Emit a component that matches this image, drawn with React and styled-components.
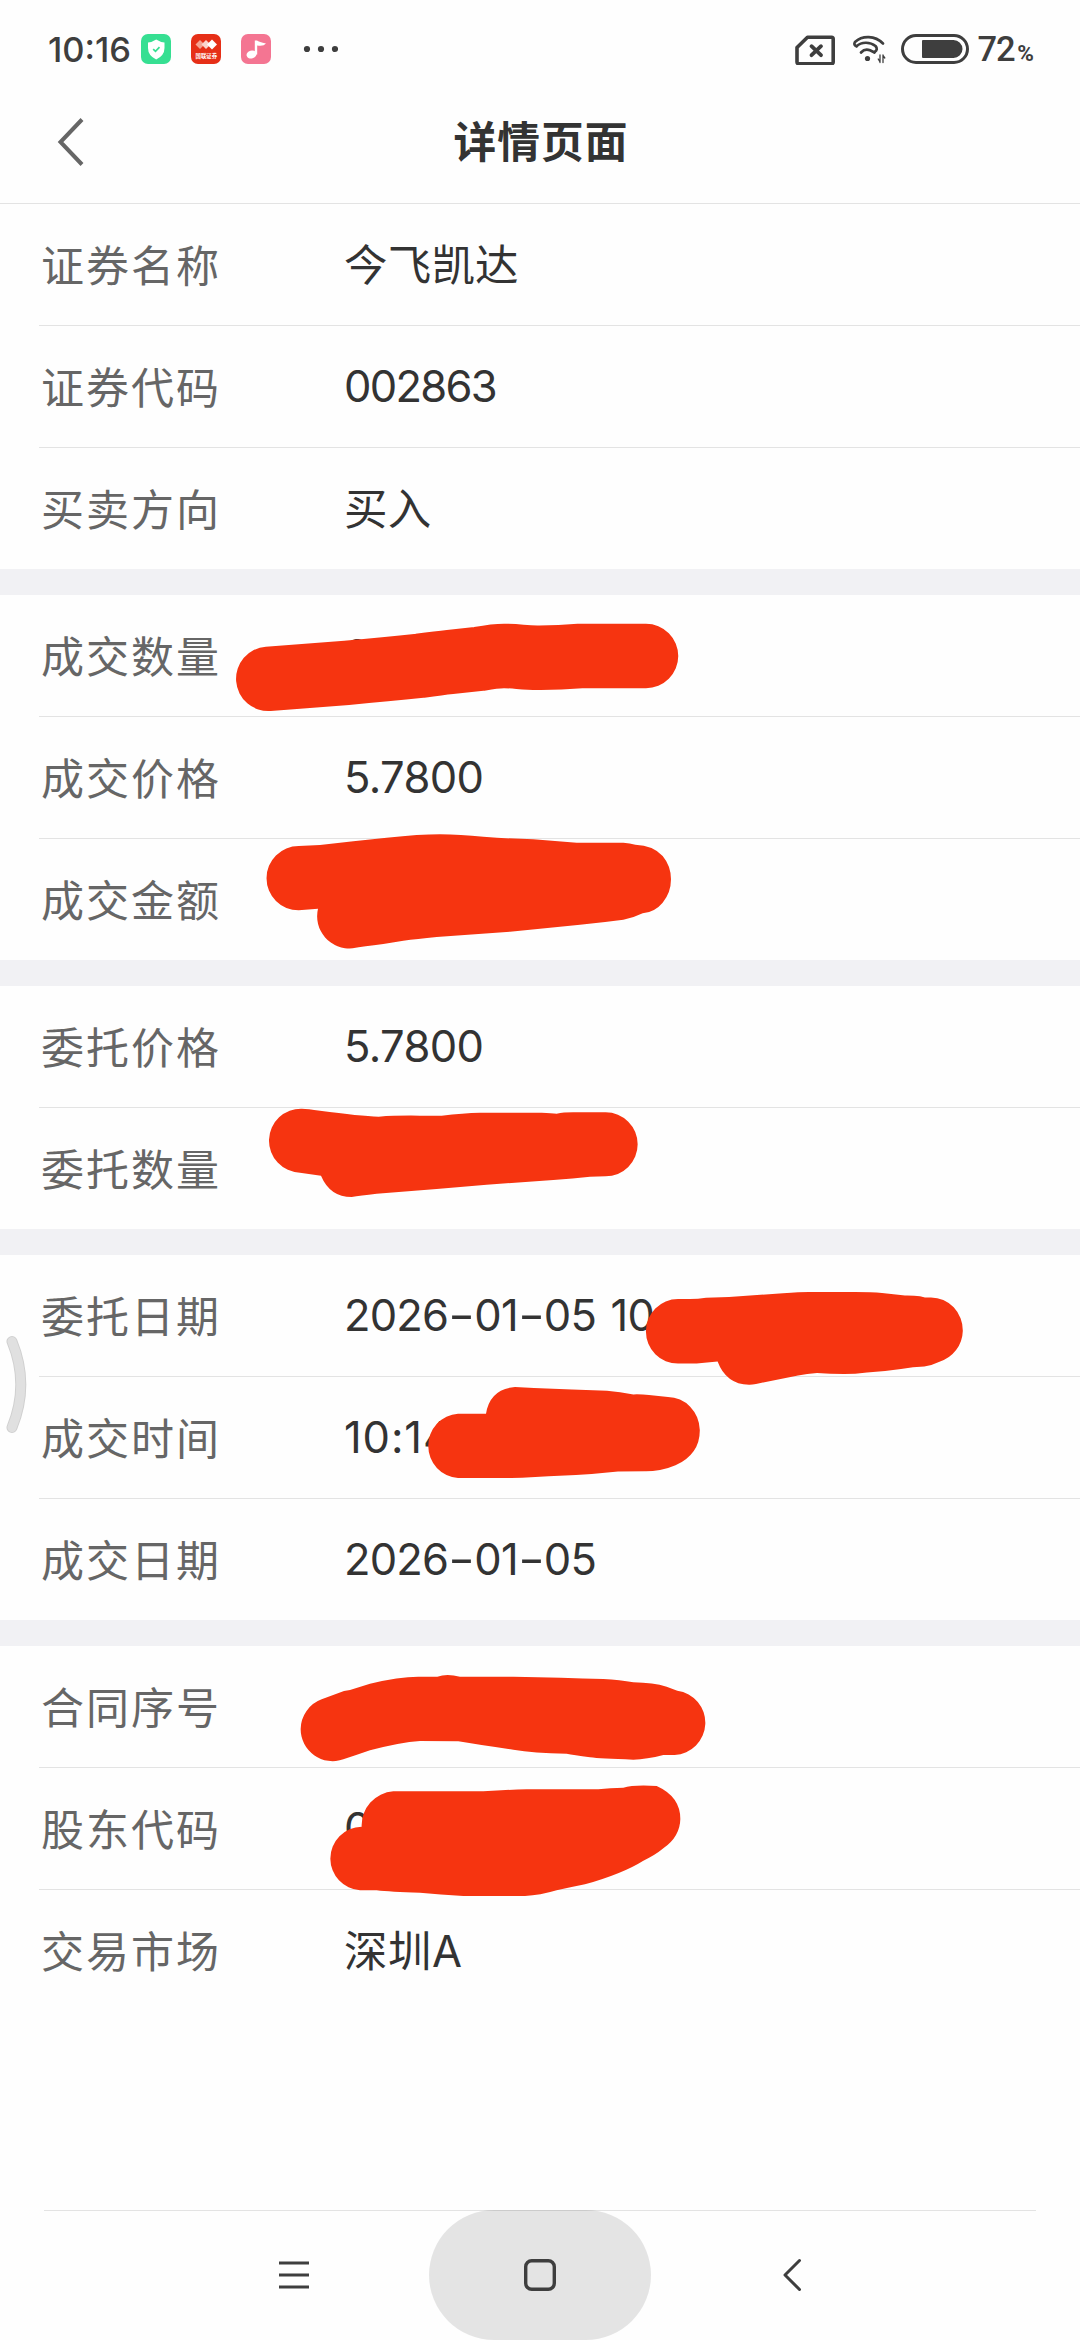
import React from 'react'
import styled, { createGlobalStyle } from 'styled-components'

const GlobalStyle = createGlobalStyle`
  * {
    box-sizing: border-box;
  }
  body {
    margin: 0;
    background: #fefefe;
    font-family: Inter, "Noto Sans CJK SC", sans-serif;
  }
`

const Phone = styled.div`
  position: relative;
  display: flex;
  flex-direction: column;
  width: 1080px;
  height: 2340px;
  overflow: hidden;
  background: #fefefe;
`

const StatusBar = styled.div`
  display: flex;
  align-items: center;
  justify-content: space-between;
  height: 82px;
  padding: 16px 46px 0 48px;
  color: #3e3e3e;
`

const StatusGroup = styled.div`
  display: flex;
  align-items: center;
  height: 40px;
`

const Clock = styled.span`
  width: 93px;
  padding-top: 1px;
  font-size: 34.5px;
  font-weight: 500;
  line-height: 40px;
  white-space: nowrap;
`

const AppIcon = styled.svg`
  width: 30px;
  height: 30px;
  margin-right: 20px;
`

const Dots = styled.svg`
  width: 36px;
  height: 8px;
  margin-left: 11px;
`

const StatusIcon = styled.svg`
  width: ${p => p.$w}px;
  height: 32px;
  margin-right: ${p => p.$gap}px;
`

const Percent = styled.span`
  padding-top: 4px;
  font-family: Roboto, sans-serif;
  font-size: 34.5px;
  font-weight: 500;
  line-height: 40px;
  letter-spacing: -1.2px;

  small {
    margin-left: 3px;
    font-size: 22.5px;
    font-weight: 700;
    letter-spacing: 0;
  }
`

const Header = styled.header`
  display: grid;
  grid-template-columns: 120px 1fr 120px;
  align-items: center;
  height: 122px;
  padding-bottom: 2px;
  border-bottom: 1px solid #e3e3e3;
`

const BackIcon = styled.svg`
  width: 28px;
  height: 50px;
  margin-left: 57px;
`

const Title = styled.h1`
  margin: 0;
  padding: 2px 0 0 2px;
  color: #333;
  font-size: 42.7px;
  font-weight: 700;
  line-height: 60px;
  letter-spacing: 1.1px;
  text-align: center;
`

const List = styled.main`
  flex: 1;
`

const Section = styled.section`
  & + & {
    border-top: 26px solid #f1f1f4;
  }
`

const Row = styled.div`
  display: flex;
  align-items: center;
  height: 122px;
  margin-left: 39px;
  padding-left: 2px;
  border-bottom: 1px solid #e3e3e3;

  &:last-child {
    height: 121px;
    border-bottom: none;
  }
`

const Label = styled.span`
  width: 303px;
  padding-top: 2px;
  color: #666;
  font-size: 43px;
  line-height: 60px;
  letter-spacing: 2px;
`

const Value = styled.span`
  padding-bottom: ${p => (p.$numeric ? 2 : 0)}px;
  color: #333;
  font-size: 43.5px;
  line-height: 60px;
  letter-spacing: ${p => p.$spacing || 0}px;
  word-spacing: 3px;
  white-space: pre;
`

const Dash = styled.span`
  display: inline-block;
  width: 26px;
  text-align: center;
  transform: scaleX(1.35);
`

const NavBar = styled.nav`
  display: flex;
  justify-content: center;
  height: 130px;
  margin: 0 44px;
  border-top: 1px solid #e3e3e3;
`

const NavButton = styled.button`
  display: flex;
  align-items: center;
  justify-content: center;
  width: ${p => (p.$active ? 222 : 270)}px;
  height: 130px;
  margin-top: -1px;
  padding: 0 0 0 ${p => p.$shift || 0}px;
  border: none;
  border-radius: 65px;
  background: ${p => (p.$active ? 'rgba(0, 0, 0, 0.1)' : 'none')};
`

const Overlay = styled.svg`
  position: absolute;
  top: 0;
  left: 0;
  pointer-events: none;
`

const sections = [
  [
    { label: '证券名称', value: '今飞凯达', spacing: 0.2 },
    { label: '证券代码', value: '002863', spacing: -1.7 },
    { label: '买卖方向', value: '买入', spacing: 0.2 },
  ],
  [
    { label: '成交数量', value: '2', spacing: -1.7 },
    { label: '成交价格', value: '5.7800', spacing: -0.6 },
    { label: '成交金额', value: '' },
  ],
  [
    { label: '委托价格', value: '5.7800', spacing: -0.6 },
    { label: '委托数量', value: '' },
  ],
  [
    { label: '委托日期', value: '2026-01-05 10', spacing: -0.8 },
    { label: '成交时间', value: '10:14', spacing: 0.9 },
    { label: '成交日期', value: '2026-01-05', spacing: -0.8 },
  ],
  [
    { label: '合同序号', value: '' },
    { label: '股东代码', value: '0', spacing: -1.7 },
    { label: '交易市场', value: '深圳A', spacing: 0.5 },
  ],
]

// marker strokes that cover the private values, drawn on a 3x grid
const marks = [
  {
    x: 220,
    y: 600,
    d: 'M236 738L300 735L400 724L500 713Q600 703 660 703Q720 704 790 710Q870 716 940 718L1070 728H1210Q1230 729 1246 734Q1300 736 1328 768Q1353 798 1353 838Q1353 878 1328 908Q1305 936 1268 940Q1240 954 1210 959Q1150 967 1080 974L870 995L650 1011Q590 1017 550 1022L490 1032Q430 1039 398 1045A97 97 0 0 1 294 926L236 931A96 96 0 0 1 236 738Z',
  },
  {
    x: 220,
    y: 960,
    d: 'M246 446Q262 446 300 452Q420 468 476 470Q530 466 600 467H665Q730 459 780 458H965Q995 459 1010 461Q1030 457 1060 457H1157A96 96 0 0 1 1157 649L1110 650Q1060 656 1000 660L800 674L650 687L470 701Q420 707 395 711Q330 711 303 647L240 638A96 96 0 0 1 246 446Z',
  },
  {
    x: 280,
    y: 1620,
    d: 'M125 238L192 213L210 210L270 191Q360 169 420 170H472Q500 160 540 170H700Q850 173 970 177Q1020 180 1060 187Q1120 188 1160 200L1192 212A97 97 0 0 1 1184 405H1150Q1100 418 1060 419Q960 416 930 412Q880 405 860 401Q760 399 700 389Q600 375 535 364L420 363Q360 367 270 391Q230 405 190 418A96 96 0 0 1 62 327A96 96 0 0 1 125 238Z',
  },
  {
    x: 280,
    y: 1620,
    d: 'M340 514H610Q680 509 740 508H955Q990 503 1030 503Q1060 494 1130 498Q1201 530 1201 597Q1200 650 1150 685Q1125 706 1090 722Q1030 760 915 793Q870 802 830 811Q780 826 735 828H550Q480 824 420 818Q330 816 290 811H240A96 96 0 0 1 151 716A96 96 0 0 1 245 620A102 102 0 0 1 340 514Z',
  },
]

const Marks = () => (
  <Overlay width="1080" height="2340" viewBox="0 0 1080 2340" fill="#f63410">
    <path
      d="M268.3 678.8L346.7 672.800Q386.7 669.4 420 665.800Q440 663 450 662L480 658.800Q495 656 504 656Q512 656 520 656.900Q532 658 540 657.800Q560 657.500 580 656H646"
      fill="none"
      stroke="#f63410"
      strokeWidth="64.500"
      strokeLinecap="round"
      strokeLinejoin="round"
    />
    {marks.map((m, i) => (
      <path key={i} d={m.d} transform={`translate(${m.x} ${m.y}) scale(0.33333)`} />
    ))}
    <path d="M678 1299H690Q698 1299 706 1297.7L729 1297L783 1293.3Q800 1292 809 1292H855Q872 1292 882 1293L905 1295.5Q914 1295.4 920 1296.2L925 1297.4H931A32 33 0 0 1 962.800 1331A33 33 0 0 1 939.5 1361.7Q932 1365.3 924.3 1366.6L913 1367.2L901 1369Q884 1371.6 867 1372.4Q855 1374 844 1374Q830 1374 817 1373Q807 1373.6 798 1375.4L756 1384Q752 1384.9 749 1384.8Q726 1384 717.6 1361.4L696.6 1363.4L678 1363.6A32 32.2 0 0 1 678 1299Z" />
    <path d="M458 1413.7H486Q490 1389 515 1387L534 1388L572 1389.6L607 1390.8Q620 1392 633.4 1394.4Q641 1394.2 649 1394.9L668 1397A32 34 0 0 1 699.8 1430Q700 1454 675.5 1465.3Q668 1468.6 660 1470Q652 1471.3 645 1471.2L618 1471.4Q597 1473.6 576 1475Q548 1476 522 1477.7L511 1478H458A31.5 32.2 0 0 1 458 1413.7Z" />
  </Overlay>
)

const EdgeHandle = () => (
  <Overlay width="30" height="2340" viewBox="0 0 30 2340" fill="none" strokeLinecap="round">
    <path d="M12 1341.5Q29.6 1384.500 12 1427.500" stroke="#d0d0d0" strokeWidth="11" />
    <path d="M12 1341.5Q29.6 1384.500 12 1427.500" stroke="#e0e0e0" strokeWidth="9" />
  </Overlay>
)

const Status = () => (
  <StatusBar>
    <StatusGroup>
      <Clock>10:16</Clock>
      <AppIcon viewBox="0 0 30 30">
        <rect width="30" height="30" rx="7" fill="#36df92" />
        <path d="M15.200 5.500Q19 8 23.500 8.500V14Q23.500 21.500 15.200 25.500Q7 21.500 7 14V8.500Q11.500 8 15.200 5.500Z" fill="#fff" />
        <path d="M12.200 15.200L14.500 17.400L18.500 13.200" fill="none" stroke="#36df92" strokeWidth="1.700" />
      </AppIcon>
      <AppIcon viewBox="0 0 30 30">
        <rect width="30" height="30" rx="7" fill="#e62f17" />
        <path d="M9 6L13.500 10.500L9 15L4.500 10.500Z" fill="#f4a392" />
        <path d="M15 6L19.500 10.500L15 15L10.500 10.500Z" fill="#fbd5cc" />
        <path d="M21 5.500L26 10.500L21 15.500L16 10.500Z" fill="#fff" />
        <text x="4.500" y="23.500" fill="#fff" fontSize="5.400" fontWeight="700">国联证券</text>
      </AppIcon>
      <AppIcon viewBox="0 0 30 30">
        <rect width="30" height="30" rx="7" fill="#f47592" />
        <ellipse cx="10.500" cy="20.500" rx="5" ry="4" fill="#fff" transform="rotate(-15 10.500 20.500)" />
        <path d="M13.800 20.500V6.500H16Q18 8.200 25 9.500Q22.500 12.800 16.200 11.500V20.500Z" fill="#fff" />
      </AppIcon>
      <Dots viewBox="0 0 36 8" fill="#3e3e3e">
        <circle cx="5" cy="4" r="3.100" />
        <circle cx="19" cy="4" r="3.100" />
        <circle cx="33" cy="4" r="3.100" />
      </Dots>
    </StatusGroup>
    <StatusGroup>
      <StatusIcon $w={40} $gap={17} viewBox="0 0 40 32" fill="none" stroke="#3e3e3e" strokeLinejoin="round">
        <path d="M12.500 4.300H36.500Q38.200 4.300 38.200 6V29Q38.200 30.700 36.500 30.700H3.700Q2 30.700 2 29V14.500Z" strokeWidth="3.600" />
        <path d="M16.500 13.200L26 22.200M26 13.200L16.500 22.200" strokeWidth="3.800" strokeLinecap="round" />
      </StatusIcon>
      <StatusIcon $w={34} $gap={15} viewBox="0 0 34 32" fill="none" stroke="#3e3e3e" strokeWidth="2.700" strokeLinecap="round">
        <path d="M31 10.500C23 2.500 10.500 2.200 3 9Q1.200 12 4.500 13.200" />
        <path d="M4.500 13.200C9.500 8.700 18 8.600 23.500 13Q26.500 16.500 22.500 19" />
        <path d="M9 19.500Q13 15.200 18 17.300L22.500 19.500" />
        <circle cx="15.500" cy="25.500" r="2.600" fill="#3e3e3e" stroke="none" />
        <path d="M28 22V29.500M26.200 26L28 28.800M31 29.500V22M32.800 25L31 22.500" strokeWidth="1.300" />
      </StatusIcon>
      <StatusIcon $w={68} $gap={9} viewBox="0 0 68 32">
        <rect x="1.500" y="2.500" width="65" height="27" rx="13.500" fill="none" stroke="#3e3e3e" strokeWidth="3" />
        <path d="M22 7H52.500A9 9 0 0 1 52.500 25H22Q21 25 21 24V8Q21 7 22 7Z" fill="#3e3e3e" />
      </StatusIcon>
      <Percent>72<small>%</small></Percent>
    </StatusGroup>
  </StatusBar>
)

const renderValue = value =>
  value.split('-').map((part, i) => (
    <React.Fragment key={i}>
      {i > 0 && <Dash>-</Dash>}
      {part}
    </React.Fragment>
  ))

class App extends React.Component {
  render() {
    return (
      <Phone>
        <GlobalStyle />
        <Status />
        <Header>
          <BackIcon viewBox="0 0 28 50" fill="none" stroke="#666" strokeWidth="4">
            <path d="M25 2.500L3.500 25L25 47.500" />
          </BackIcon>
          <Title>详情页面</Title>
        </Header>
        <List>
          {sections.map((rows, i) => (
            <Section key={i}>
              {rows.map(row => (
                <Row key={row.label}>
                  <Label>{row.label}</Label>
                  <Value $spacing={row.spacing} $numeric={/^\d/.test(row.value)}>
                    {renderValue(row.value)}
                  </Value>
                </Row>
              ))}
            </Section>
          ))}
        </List>
        <NavBar>
          <NavButton>
            <svg width="32" height="30" viewBox="0 0 32 30" stroke="#3e3e3e" strokeWidth="3.200">
              <path d="M1 3H31M1 15H31M1 27H31" />
            </svg>
          </NavButton>
          <NavButton $active>
            <svg width="34" height="34" viewBox="0 0 34 34" fill="none" stroke="#3e3e3e" strokeWidth="3.400">
              <rect x="2.700" y="2.700" width="28.600" height="28.600" rx="6" />
            </svg>
          </NavButton>
          <NavButton $shift={11}>
            <svg width="20" height="34" viewBox="0 0 20 34" fill="none" stroke="#3e3e3e" strokeWidth="3" strokeLinejoin="round" strokeLinecap="round">
              <path d="M17.500 2.500L3 17L17.500 31.500" />
            </svg>
          </NavButton>
        </NavBar>
        <Marks />
        <EdgeHandle />
      </Phone>
    )
  }
}

export default App
